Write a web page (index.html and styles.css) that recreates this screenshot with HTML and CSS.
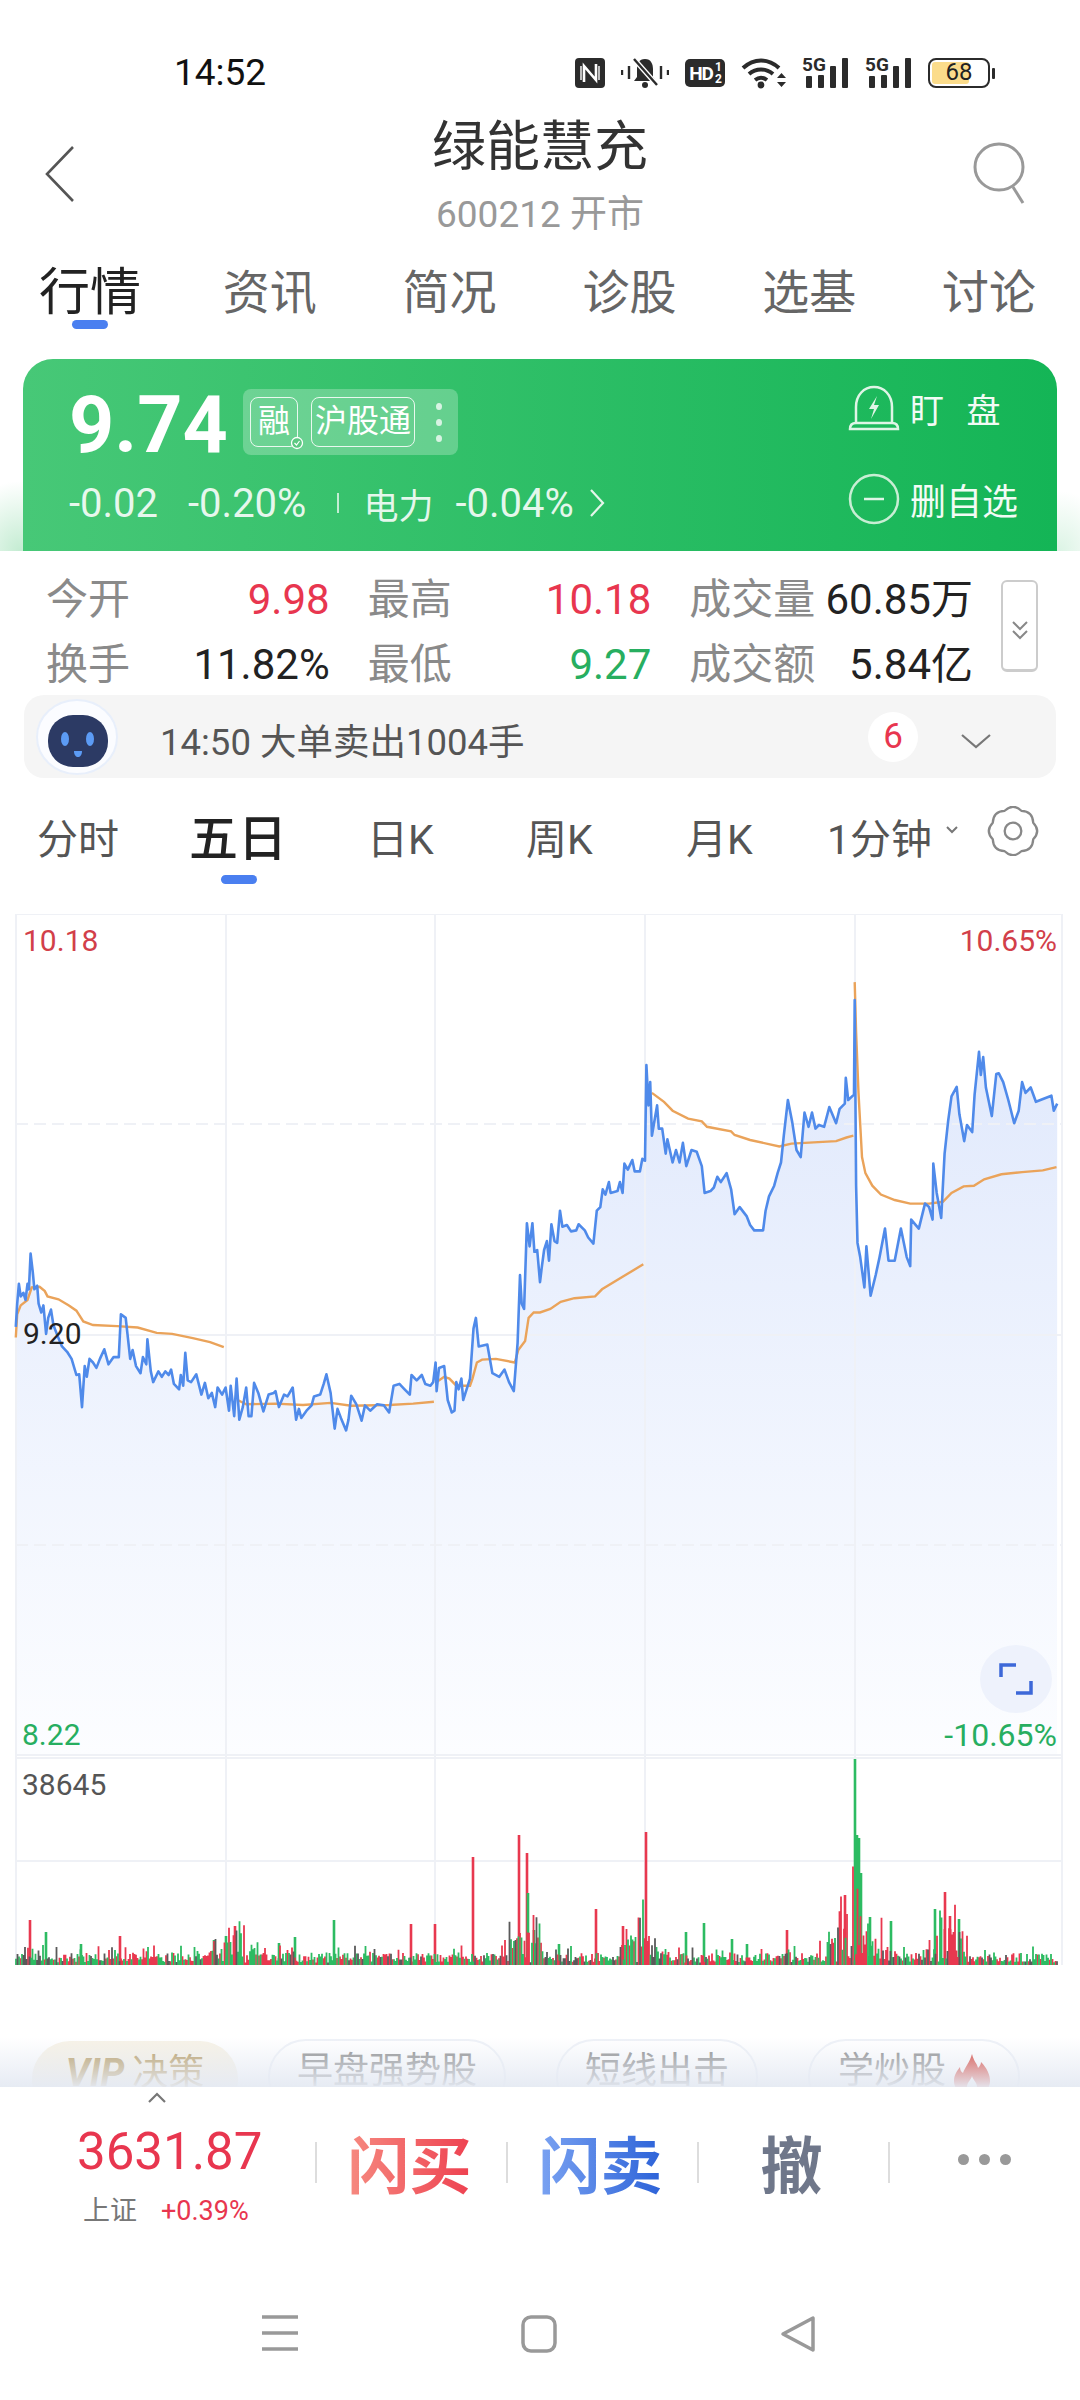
FILE: index.html
```html
<!DOCTYPE html>
<html lang="zh-CN">
<head>
  <meta charset="UTF-8">
  <meta name="viewport" content="width=device-width, initial-scale=1.0">
  <title>绿能慧充</title>
  <link rel="stylesheet" href="styles.css">
</head>
<body>
  <div class="page">

    <!-- Status bar -->
    <div class="statusbar">
      <span class="clock">14:52</span>
      <div class="status-icons">
        <svg width="30" height="30" viewBox="0 0 30 30"><rect width="30" height="30" rx="4" fill="#2b2b2b"/><path d="M9 24V8l12 14V6" fill="none" stroke="#fff" stroke-width="2.6"/><path d="M6 8v14M24 8v14" stroke="#fff" stroke-width="1.4"/></svg>
        <svg width="48" height="32" viewBox="0 0 48 32"><path d="M24 2c-6 0-8 5-8 10v8l-3 4h22l-3-4v-8c0-5-2-10-8-10z" fill="#2b2b2b"/><circle cx="24" cy="28" r="3" fill="#2b2b2b"/><path d="M13 2l23 26" stroke="#fff" stroke-width="5"/><path d="M13 2l23 26" stroke="#2b2b2b" stroke-width="2.4"/><path d="M1 13v5M8 9v13M40 9v13M47 13v5" stroke="#2b2b2b" stroke-width="2.4"/></svg>
        <div class="hd-icon"><span>HD</span><span class="hd-frac">1<br>2</span></div>
        <svg width="45" height="32" viewBox="0 0 45 32"><path d="M2 11c11-10 25-10 36 0M8 17c7-6 17-6 24 0M14 23c4-3 8-3 12 0" fill="none" stroke="#2b2b2b" stroke-width="4"/><circle cx="20" cy="28" r="3.4" fill="#2b2b2b"/><path d="M36 21l4.500-5 4.500 5zM36 25l4.500 5 4.500-5z" fill="#2b2b2b"/></svg>
        <div class="signal"><span class="signal-5g">5G</span><i class="b1"></i><i class="b2"></i><i class="b3"></i><i class="b4"></i></div>
        <div class="signal"><span class="signal-5g">5G</span><i class="b1"></i><i class="b2"></i><i class="b3"></i><i class="b4"></i></div>
        <div class="battery"><div class="battery-body"><div class="battery-fill"></div><span>68</span></div><div class="battery-cap"></div></div>
      </div>
    </div>

    <!-- Title -->
    <div class="titlebar">
      <svg class="back-icon" width="32" height="58" viewBox="0 0 32 58"><path d="M29 2L3 29l26 27" fill="none" stroke="#555" stroke-width="2.6"/></svg>
      <div class="title-block">
        <div class="stock-name">绿能慧充</div>
        <div class="stock-code">600212 开市</div>
      </div>
      <svg class="search-icon" width="56" height="64" viewBox="0 0 56 64"><ellipse cx="27" cy="25" rx="24" ry="23" fill="none" stroke="#999" stroke-width="3"/><path d="M41 45l10 16" stroke="#999" stroke-width="3"/></svg>
    </div>

    <!-- Main tabs -->
    <div class="tabs">
      <div class="tab tab-active">行情</div>
      <div class="tab">资讯</div>
      <div class="tab">简况</div>
      <div class="tab">诊股</div>
      <div class="tab">选基</div>
      <div class="tab">讨论</div>
    </div>

    <!-- Green quote card -->
    <div class="card-wrap">
      <div class="quote-card">
        <div class="quote-left">
          <div class="quote-top">
            <span class="price">9.74</span>
            <div class="tag-group">
              <span class="tag tag-rong">融<svg class="tag-check" width="14" height="14" viewBox="0 0 14 14"><circle cx="7" cy="7" r="5.500" fill="#5cc982" stroke="#fff" stroke-width="1.300"/><path d="M4.500 7l2 2 3-4" fill="none" stroke="#fff" stroke-width="1.200"/></svg></span>
              <span class="tag">沪股通</span>
              <span class="tag-dots"><i></i><i></i><i></i></span>
            </div>
          </div>
          <div class="quote-bottom">
            <span>-0.02</span>
            <span class="chg-pct">-0.20%</span>
            <span class="quote-divider"></span>
            <span class="sector-name">电力</span>
            <span class="sector-pct">-0.04%</span>
            <svg width="16" height="30" viewBox="0 0 16 30"><path d="M2 2l12 13L2 28" fill="none" stroke="#e4f6ea" stroke-width="2.200"/></svg>
          </div>
        </div>
        <div class="quote-actions">
          <div class="quote-action">
            <svg width="52" height="46" viewBox="0 0 52 46"><path d="M8 38V22C8 10 16 2 26 2s18 8 18 20v16" fill="none" stroke="#dff5e6" stroke-width="2.500"/><path d="M2 44c0-4 2-6 6-6h36c4 0 6 2 6 6z" fill="none" stroke="#dff5e6" stroke-width="2.500"/><path d="M29 11l-8 13h5l-3 10 8-14h-5z" fill="#dff5e6"/></svg>
            <span class="action-watch">盯 盘</span>
          </div>
          <div class="quote-action">
            <svg width="52" height="52" viewBox="0 0 52 52"><circle cx="26" cy="26" r="24" fill="none" stroke="#c8eed4" stroke-width="2.500"/><path d="M16 26h20" stroke="#dff5e6" stroke-width="2.500"/></svg>
            <span class="action-remove">删自选</span>
          </div>
        </div>
      </div>
    </div>

    <!-- Stats -->
    <div class="stats">
      <div class="stat-grid">
        <div class="stat"><span class="stat-label">今开</span><span class="up">9.98</span></div>
        <div class="stat"><span class="stat-label">最高</span><span class="up">10.18</span></div>
        <div class="stat"><span class="stat-label">成交量</span><span>60.85万</span></div>
        <div class="stat"><span class="stat-label">换手</span><span>11.82%</span></div>
        <div class="stat"><span class="stat-label">最低</span><span class="down">9.27</span></div>
        <div class="stat"><span class="stat-label">成交额</span><span>5.84亿</span></div>
      </div>
      <div class="stat-toggle">
        <svg width="18" height="20" viewBox="0 0 18 20"><path d="M2 2l7 7 7-7M2 11l7 7 7-7" fill="none" stroke="#888" stroke-width="2"/></svg>
      </div>
    </div>

    <!-- Notice -->
    <div class="notice">
      <svg class="robot" width="84" height="76" viewBox="0 0 84 76"><ellipse cx="42" cy="38" rx="40" ry="37" fill="#fbfcff" stroke="#e8effb" stroke-width="2"/><rect x="13" y="16" width="60" height="52" rx="25" fill="#2c3a64"/><ellipse cx="30" cy="40" rx="4" ry="7" fill="#5c9bf5"/><ellipse cx="55" cy="40" rx="4" ry="7" fill="#5c9bf5"/><path d="M39 52h8c0 4-2 6-4 6s-4-2-4-6z" fill="#5c9bf5"/></svg>
      <span class="notice-text">14:50 大单卖出1004手</span>
      <span class="notice-badge">6</span>
      <svg class="notice-arrow" width="32" height="16" viewBox="0 0 32 16"><path d="M2 2l14 12L30 2" fill="none" stroke="#777" stroke-width="2.200"/></svg>
    </div>

    <!-- Period tabs -->
    <div class="periods">
      <div class="period period-1">分时</div>
      <div class="period period-2 period-active">五日</div>
      <div class="period period-3">日K</div>
      <div class="period period-4">周K</div>
      <div class="period period-5">月K</div>
      <div class="period period-6">1分钟</div>
      <svg class="period-arrow" width="14" height="10" viewBox="0 0 14 10"><path d="M2 2l5 5 5-5" fill="none" stroke="#777" stroke-width="2"/></svg>
      <svg class="gear" width="54" height="50" viewBox="4 2 48 48"><path d="M47.400 18Q55 26 47.400 34Q47 45 36 45.400Q28 53 20 45.400Q9 45 8.600 34Q1 26 8.600 18Q9 7 20 6.600Q28 -1 36 6.600Q47 7 47.400 18z" fill="none" stroke="#888" stroke-width="2.200" stroke-linejoin="round"/><circle cx="28" cy="26" r="8" fill="none" stroke="#888" stroke-width="2.200"/></svg>
    </div>

    <!-- Chart, drawn by chart.js -->
    <div class="chart">
      <svg id="chartSvg" width="1080" height="1056" viewBox="0 914 1080 1056"></svg>
      <span class="axis-label axis-high">10.18</span>
      <span class="axis-label axis-high-pct">10.65%</span>
      <span class="axis-label axis-prev">9.20</span>
      <span class="axis-label axis-low">8.22</span>
      <span class="axis-label axis-low-pct">-10.65%</span>
      <span class="axis-label axis-vol">38645</span>
      <div class="expand-btn">
        <svg width="34" height="32" viewBox="0 0 34 32"><path d="M2 14V2h15M32 18v12H17" fill="none" stroke="#3d68d8" stroke-width="3.500"/></svg>
      </div>
    </div>

    <!-- Chips, fading under the toolbar -->
    <div class="chips">
      <div class="chip chip-vip"><b>VIP</b> 决策</div>
      <div class="chip chip-2">早盘强势股</div>
      <div class="chip chip-3">短线出击</div>
      <div class="chip chip-4">学炒股
        <svg width="36" height="42" viewBox="0 0 36 42"><path d="M18 0c2 8 5 9 6 14 2-2 3-4 3-6 6 6 9 13 9 19 0 9-8 15-18 15S0 36 0 27c0-6 3-10 6-14 0 3 1 5 3 6 2-6 7-11 9-19z" fill="#d63a2e"/><path d="M18 22c1 4 5 6 5 11 0 3-2 5-5 5s-5-2-5-5c0-5 4-7 5-11z" fill="#fff"/></svg>
      </div>
    </div>

    <!-- Bottom toolbar -->
    <div class="toolbar">
      <svg class="index-arrow" width="18" height="11" viewBox="0 0 18 11"><path d="M1 10l8-8 8 8" fill="none" stroke="#777" stroke-width="2.200"/></svg>
      <div class="index-block">
        <div class="index-value">3631.87</div>
        <div class="index-meta"><span class="index-name">上证</span><span class="index-pct">+0.39%</span></div>
      </div>
      <div class="tool-cell"><span class="tool-text tool-buy">闪买</span></div>
      <div class="tool-cell"><span class="tool-text tool-sell">闪卖</span></div>
      <div class="tool-cell"><span class="tool-text tool-cancel">撤</span></div>
      <div class="tool-cell tool-more"><i></i><i></i><i></i></div>
    </div>

    <!-- Navigation bar -->
    <div class="navbar">
      <svg width="36" height="36" viewBox="0 0 36 36"><path d="M0 2h36M0 18h36M0 34h36" stroke="#999" stroke-width="3.500"/></svg>
      <svg width="36" height="38" viewBox="0 0 36 38"><rect x="2" y="2" width="32" height="34" rx="8" fill="none" stroke="#999" stroke-width="3.500"/></svg>
      <svg width="36" height="38" viewBox="0 0 36 38"><path d="M33 3v32L3 19z" fill="none" stroke="#999" stroke-width="3.500" stroke-linejoin="round"/></svg>
    </div>

  </div>
  <script src="chart.js"></script>
</body>
</html>
```

FILE: styles.css
```css
* {
  box-sizing: border-box;
}

body {
  margin: 0;
  background-color: #fff;
  font-family: Roboto, "Noto Sans CJK SC", sans-serif;
  color: #222;
}

.page {
  width: 1080px;
  height: 2400px;
  overflow: hidden;
  position: relative;
}

/* Status bar */
.statusbar {
  height: 100px;
  display: flex;
  justify-content: space-between;
  padding: 52px 85px 0 174px;
}

.clock {
  font-size: 37px;
  line-height: 42px;
  color: #111;
}

.status-icons {
  display: flex;
  gap: 16px;
  height: 32px;
  margin-top: 5px;
  align-items: center;
}

.hd-icon {
  width: 40px;
  height: 28px;
  border-radius: 5px;
  background-color: #2b2b2b;
  color: #fff;
  font-size: 19px;
  font-weight: 700;
  letter-spacing: -1px;
  display: flex;
  align-items: center;
  justify-content: center;
  gap: 2px;
}

.hd-frac {
  font-size: 12px;
  line-height: 12px;
}

.signal {
  width: 47px;
  height: 30px;
  position: relative;
}

.signal-5g {
  position: absolute;
  left: 0;
  top: -3px;
  font-size: 19px;
  line-height: 19px;
  font-weight: 700;
  color: #2b2b2b;
}

.signal i {
  position: absolute;
  bottom: 0;
  width: 6px;
  background-color: #2b2b2b;
  border-radius: 1px;
}

.signal .b1 { left: 4px; height: 12px; }
.signal .b2 { left: 16px; height: 13px; }
.signal .b3 { left: 28px; height: 22px; }
.signal .b4 { left: 40px; height: 30px; }

.battery {
  display: flex;
  align-items: center;
  gap: 2px;
}

.battery-body {
  width: 62px;
  height: 30px;
  border: 2.5px solid #2b2b2b;
  border-radius: 8px;
  position: relative;
  padding: 2px;
  display: flex;
}

.battery-fill {
  width: 68%;
  background-color: #fbdc8b;
  border-radius: 3px;
}

.battery-body span {
  position: absolute;
  left: 0;
  right: 0;
  top: 0;
  text-align: center;
  font-size: 24px;
  line-height: 25px;
  color: #222;
}

.battery-cap {
  width: 3px;
  height: 11px;
  background-color: #2b2b2b;
  border-radius: 1px;
}

/* Title */
.titlebar {
  height: 150px;
  display: grid;
  grid-template-columns: 1fr auto 1fr;
  padding: 0 48px;
}

.back-icon {
  margin: 45px 0 0 -4px;
}

.search-icon {
  margin: 42px 4px 0 0;
  justify-self: end;
}

.title-block {
  text-align: center;
  padding-top: 16px;
}

.stock-name {
  font-size: 54px;
  line-height: 64px;
  color: #333;
}

.stock-code {
  font-size: 37px;
  line-height: 46px;
  margin-top: 12px;
  color: #999;
}

/* Main tabs */
.tabs {
  height: 90px;
  display: flex;
  justify-content: space-between;
  padding: 11px 44px 0 39px;
}

.tab {
  font-size: 47px;
  line-height: 64px;
  color: #666;
}

.tab-active {
  font-size: 51px;
  color: #222;
  position: relative;
  margin-right: -4px;
}

.tab-active::after {
  content: "";
  position: absolute;
  left: 33px;
  top: 59px;
  width: 36px;
  height: 9px;
  border-radius: 5px;
  background-color: #4a7ff0;
}

/* Quote card */
.card-wrap {
  height: 211px;
  padding: 19px 23px 0;
  background:
    radial-gradient(ellipse 60px 70px at 20px 100%, #c4ecd2, rgba(255, 255, 255, 0)) no-repeat,
    radial-gradient(ellipse 50px 60px at 1060px 100%, #dcf4e5, rgba(255, 255, 255, 0)) no-repeat;
}

.quote-card {
  height: 192px;
  border-radius: 30px 30px 0 0;
  background: linear-gradient(90deg, #47c877, #14b556);
  color: #fff;
  display: flex;
  justify-content: space-between;
  padding: 30px 29px 0 46px;
}

.quote-top {
  display: flex;
  align-items: flex-start;
  gap: 15px;
  height: 76px;
}

.price {
  font-size: 79px;
  line-height: 72px;
  font-weight: 700;
}

.tag-group {
  width: 215px;
  height: 66px;
  background-color: rgba(255, 255, 255, 0.25);
  border-radius: 8px;
  display: flex;
  align-items: center;
  gap: 13px;
  padding-left: 7px;
}

.tag {
  height: 50px;
  padding: 0 3px;
  border: 1.5px solid rgba(255, 255, 255, 0.85);
  border-radius: 8px;
  font-size: 32px;
  line-height: 46px;
  position: relative;
}

.tag-rong {
  padding: 0 7px;
}

.tag-check {
  position: absolute;
  right: -7px;
  bottom: -4px;
}

.tag-dots {
  display: flex;
  flex-direction: column;
  gap: 9px;
  margin-left: 8px;
}

.tag-dots i {
  width: 6px;
  height: 7px;
  border-radius: 50%;
  background-color: rgba(255, 255, 255, 0.75);
}

.quote-bottom {
  display: flex;
  align-items: center;
  height: 40px;
  margin-top: 18px;
  font-size: 40px;
  color: rgba(255, 255, 255, 0.88);
}

.chg-pct {
  margin-left: 30px;
}

.quote-divider {
  width: 2px;
  height: 20px;
  margin: 0 24px 0 31px;
  background-color: rgba(255, 255, 255, 0.7);
}

.sector-name {
  font-size: 35px;
}

.sector-pct {
  margin: 0 15px 0 22px;
}

.quote-actions {
  display: flex;
  flex-direction: column;
  gap: 41px;
  width: 180px;
  margin-top: -6px;
}

.quote-action {
  display: flex;
  align-items: center;
  gap: 10px;
  height: 50px;
  font-size: 36px;
  color: #f2fbf5;
  white-space: nowrap;
}

.action-watch {
  word-spacing: 14px;
  font-size: 34px;
}

/* Stats */
.stats {
  height: 144px;
  display: flex;
  padding: 16px 0 0 46px;
}

.stat-grid {
  width: 927px;
  display: grid;
  grid-template-columns: repeat(3, 1fr);
  grid-auto-rows: 65px;
  column-gap: 38px;
  font-size: 42px;
  line-height: 65px;
  color: #222;
}

.stat {
  display: flex;
  justify-content: space-between;
}

.stat-label {
  color: #8a8a8a;
}

.up {
  color: #e8364f;
}

.down {
  color: #27ae60;
}

.stat-toggle {
  width: 37px;
  height: 92px;
  margin: 13px 0 0 28px;
  border: 2px solid #ccc;
  border-bottom-width: 3px;
  border-radius: 6px;
  display: flex;
  align-items: center;
  justify-content: center;
  padding-top: 8px;
}

/* Notice */
.notice {
  width: 1032px;
  height: 83px;
  margin-left: 24px;
  background-color: #f5f5f5;
  border-radius: 20px;
  display: flex;
  align-items: center;
  padding-left: 11px;
}

.notice-text {
  margin: 5px 0 0 41px;
  font-size: 36.500px;
  color: #555;
  width: 703px;
  white-space: nowrap;
}

.notice-badge {
  width: 50px;
  height: 50px;
  margin-left: 5px;
  border-radius: 50%;
  background-color: #fff;
  color: #e8364f;
  font-size: 35px;
  line-height: 50px;
  text-align: center;
}

.notice-arrow {
  margin: 8px 0 0 42px;
}

/* Period tabs */
.periods {
  height: 136px;
  position: relative;
  display: grid;
  grid-template-columns: 152px 178px 159px 160px 141px 1fr;
  padding: 32px 0 0 37px;
  font-size: 41px;
  line-height: 60px;
  color: #555;
}

.period-active {
  font-size: 49px;
  color: #222;
  font-weight: 500;
  position: relative;
}

.period-active::after {
  content: "";
  position: absolute;
  left: 32px;
  top: 65px;
  width: 36px;
  height: 9px;
  border-radius: 5px;
  background-color: #4a7ff0;
}

.period-arrow {
  position: absolute;
  left: 945px;
  top: 47px;
}

.gear {
  position: absolute;
  left: 986px;
  top: 28px;
}

/* Chart */
.chart {
  height: 1123px;
  position: relative;
}

.chart svg {
  display: block;
}

.axis-label {
  position: absolute;
  font-size: 30px;
  line-height: 32px;
}

.axis-high { left: 23px; top: 11px; color: #d23f4a; }
.axis-high-pct { right: 23px; top: 11px; color: #d23f4a; }
.axis-prev { left: 23px; top: 404px; color: #222; }
.axis-low { left: 22px; top: 805px; color: #27ae60; }
.axis-low-pct { right: 23px; top: 805px; color: #27ae60; font-size: 32px; }
.axis-vol { left: 22px; top: 855px; color: #555; }

.expand-btn {
  position: absolute;
  left: 980px;
  top: 731px;
  width: 72px;
  height: 68px;
  border-radius: 50%;
  background-color: #eef2fc;
  display: flex;
  align-items: center;
  justify-content: center;
}

/* Chips */
.chips {
  height: 50px;
  overflow: hidden;
  position: relative;
  font-size: 36px;
  color: #888;
}

.chips::after {
  content: "";
  position: absolute;
  inset: 0;
  background: linear-gradient(rgba(229, 234, 243, 0), rgba(229, 234, 243, 0.95));
}

.chip {
  position: absolute;
  top: 2px;
  height: 76px;
  border: 2px solid #eef1f7;
  border-radius: 38px;
  display: flex;
  justify-content: center;
  gap: 8px;
  line-height: 50px;
  padding-top: 5px;
}

.chip-vip {
  left: 32px;
  top: 4px;
  width: 206px;
  border: none;
  background-color: #f7f2e6;
  color: #b4975a;
  padding-top: 7px;
}

.chip-vip b {
  font-style: italic;
  font-size: 38px;
}

.chip-2 { left: 268px; width: 238px; }
.chip-3 { left: 556px; width: 202px; }
.chip-4 { left: 808px; width: 212px; }

.chip-4 svg {
  margin-top: 8px;
}

/* Toolbar */
.toolbar {
  height: 213px;
  position: relative;
  background-color: #fff;
  display: flex;
}

.index-arrow {
  position: absolute;
  left: 148px;
  top: 5px;
}

.index-block {
  width: 315px;
  padding: 37px 0 0 77px;
}

.index-value {
  font-size: 51px;
  line-height: 56px;
  color: #e8364f;
}

.index-meta {
  display: flex;
  gap: 24px;
  margin-top: 13px;
  font-size: 27px;
  line-height: 36px;
  padding-left: 6px;
}

.index-name {
  color: #777;
}

.index-pct {
  color: #e8364f;
}

.tool-cell {
  width: 191px;
  height: 41px;
  margin-top: 55px;
  padding-right: 4px;
  border-left: 2px solid #ddd;
  display: flex;
  justify-content: center;
}

.tool-text {
  font-size: 62px;
  line-height: 72px;
  height: 72px;
  margin-top: -10px;
  font-weight: 700;
  -webkit-background-clip: text;
  background-clip: text;
  color: transparent;
}

.tool-buy {
  background-image: linear-gradient(90deg, #f68a80, #ee4150);
}

.tool-sell {
  background-image: linear-gradient(90deg, #7ba3f2, #2c62d8);
}

.tool-cancel {
  background-image: linear-gradient(#6f778a, #6f778a);
}

.tool-more {
  align-items: center;
  gap: 10px;
  padding-right: 0;
}

.tool-more i {
  width: 11px;
  height: 11px;
  margin-top: -6px;
  border-radius: 50%;
  background-color: #999;
}

/* Navigation bar */
.navbar {
  display: flex;
  padding: 15px 0 0 262px;
  gap: 223px;
}
```

FILE: chart.js
```js
// Traced from the two halves of the chart: x is px on a 540 wide crop scaled to 1568,
// y is px on a 560 tall crop scaled to 1568, both starting at y = 900.
const LEFT_X = 0;
const RIGHT_X = 540;

function toPage(points, offsetX) {
  return points.map(p => (offsetX + p[0] / 2.904).toFixed(1) + ',' + (900 + p[1] / 2.8).toFixed(1));
}

const priceLeft = [[46,1195],[50,1130],[55,1075],[60,1110],[68,1100],[74,1120],[80,1075],[84,1090],[89,990],[95,1040],[100,1090],[108,1080],[112,1130],[120,1155],[126,1135],[134,1215],[140,1170],[148,1147],[155,1190],[165,1215],[180,1250],[195,1265],[208,1285],[222,1330],[230,1328],[238,1420],[246,1305],[252,1335],[260,1285],[270,1295],[280,1310],[290,1285],[303,1258],[315,1300],[330,1280],[345,1280],[351,1160],[365,1170],[378,1285],[385,1260],[395,1305],[408,1325],[415,1280],[425,1300],[428,1230],[438,1320],[445,1350],[460,1320],[470,1335],[480,1320],[490,1330],[497,1315],[505,1355],[520,1370],[525,1330],[532,1360],[538,1268],[545,1345],[555,1350],[570,1328],[585,1385],[595,1352],[605,1395],[615,1380],[625,1420],[632,1365],[645,1385],[655,1365],[665,1430],[670,1360],[680,1445],[687,1340],[695,1455],[705,1420],[715,1365],[722,1445],[730,1445],[738,1352],[750,1380],[765,1432],[780,1385],[795,1380],[800,1375],[810,1420],[825,1385],[835,1390],[850,1365],[860,1455],[868,1425],[875,1450],[890,1430],[905,1415],[912,1390],[930,1385],[940,1355],[948,1328],[960,1380],[972,1480],[980,1425],[990,1450],[1005,1485],[1012,1455],[1020,1388],[1035,1412],[1050,1458],[1060,1415],[1075,1430],[1095,1412],[1115,1415],[1130,1435],[1143,1360],[1160,1355],[1175,1370],[1190,1385],[1195,1330],[1210,1345],[1225,1330],[1235,1355],[1250,1360],[1258,1350],[1265,1295],[1268,1375],[1275,1310],[1290,1305],[1300,1400],[1312,1435],[1320,1430],[1325,1350],[1332,1370],[1340,1340],[1345,1400],[1355,1370],[1365,1340],[1375,1200],[1382,1170],[1390,1250],[1415,1245],[1430,1325],[1450,1335],[1465,1315],[1478,1350],[1492,1375],[1503,1240],[1510,1050],[1515,1130],[1522,1145],[1530,905],[1538,970],[1546,905],[1552,985],[1560,980]];

const priceRight = [[0,1070],[5,1030],[12,980],[20,955],[26,1010],[33,908],[42,955],[50,960],[58,870],[65,915],[78,910],[90,928],[105,925],[112,908],[130,925],[140,945],[155,962],[165,870],[175,860],[182,810],[190,825],[200,790],[205,820],[225,815],[232,790],[240,820],[245,738],[255,755],[268,728],[275,760],[290,760],[297,725],[305,730],[309,462],[315,575],[320,510],[325,660],[340,575],[345,640],[355,640],[365,710],[370,670],[385,735],[395,700],[405,735],[415,680],[425,745],[440,700],[455,705],[470,745],[478,820],[495,815],[505,805],[515,775],[525,790],[542,765],[555,810],[565,880],[580,860],[600,885],[610,910],[622,925],[648,925],[655,870],[665,830],[680,800],[690,765],[700,735],[708,660],[720,560],[732,620],[745,700],[757,720],[768,595],[780,635],[790,595],[800,640],[810,630],[825,635],[840,580],[860,625],[870,585],[885,570],[888,498],[895,560],[912,545],[914,280],[918,800],[922,960],[930,1000],[942,1085],[948,970],[960,1108],[975,1050],[985,1005],[1002,920],[1012,1010],[1030,1010],[1048,920],[1065,1000],[1075,1025],[1078,895],[1100,920],[1118,850],[1130,860],[1140,895],[1142,738],[1152,820],[1165,890],[1175,710],[1185,620],[1195,550],[1210,523],[1218,600],[1232,675],[1240,630],[1255,650],[1262,545],[1275,425],[1280,490],[1287,440],[1295,525],[1312,605],[1325,487],[1332,485],[1345,510],[1360,560],[1377,625],[1390,590],[1400,510],[1410,540],[1425,525],[1440,565],[1485,548],[1492,590],[1502,570]];

// Average line, one piece per trading day
const avgDays = [
  toPage([[46,1225],[50,1160],[60,1135],[80,1120],[92,1085],[115,1083],[130,1095],[138,1110],[170,1118],[200,1135],[222,1150],[242,1180],[270,1190],[340,1193],[400,1197],[455,1212],[500,1215],[560,1227],[610,1238],[650,1252]], LEFT_X),
  toPage([[690,1400],[715,1412],[800,1410],[880,1414],[960,1408],[1020,1416],[1130,1414],[1200,1410],[1260,1405]], LEFT_X),
  toPage([[1268,1350],[1290,1335],[1305,1340],[1325,1360],[1365,1360],[1372,1340],[1385,1295],[1400,1287],[1440,1285],[1495,1295],[1505,1260],[1525,1235],[1535,1170],[1550,1155]], LEFT_X)
    .concat(toPage([[0,1155],[30,1145],[60,1125],[100,1115],[160,1110],[180,1090],[240,1055],[300,1020]], RIGHT_X)),
  toPage([[325,540],[360,565],[385,590],[430,612],[470,620],[485,635],[555,648],[565,658],[610,672],[695,690],[730,682],[860,675],[890,665],[910,660]], RIGHT_X),
  toPage([[914,230],[918,370],[925,540],[935,720],[945,765],[965,800],[990,825],[1030,840],[1075,850],[1130,850],[1170,845],[1195,820],[1230,802],[1260,800],[1290,782],[1340,768],[1400,762],[1460,757],[1500,748]], RIGHT_X)
];

const pricePoints = toPage(priceLeft, LEFT_X).concat(toPage(priceRight, RIGHT_X));

// Tall volume bars, [x, top y] on the page
const BASE_Y = 1965;
const tallRed = [[30,1920],[120,1936],[235,1926],[411,1924],[435,1924],[473,1857],[519,1835],[527,1853],[596,1909],[623,1926],[646,1832],[787,1930],[845,1895],[945,1892],[950,1916]];
const tallGreen = [[46,1932],[81,1944],[214,1940],[226,1936],[279,1943],[295,1937],[334,1920],[534,1930],[528,1893],[559,1944],[686,1932],[704,1923],[732,1939],[747,1944],[855,1759],[857,1835],[859,1838],[861,1873],[870,1917],[891,1921],[935,1909],[959,1919]];

// Small bars are filler, so a fixed seed keeps the picture the same on every load
let seed = 20240;
function rand() {
  seed = (seed * 1103515 + 12345) % 2147483648;
  return seed / 2147483648;
}

function clusterHeight(x) {
  const peaks = [[235,30,30],[525,45,22],[645,50,26],[855,65,32],[950,45,24]];
  let h = 12;
  peaks.forEach(p => {
    h = Math.max(h, p[1] * Math.exp(-Math.pow((x - p[0]) / p[2], 2)));
  });
  return h;
}

function barPath(list) {
  return list.map(b => 'M' + b[0] + ' ' + BASE_Y + 'V' + b[1]).join('');
}

function buildVolume() {
  const groups = { red: [], green: [], dark: [] };
  for (let x = 16; x < 1058; x += 1.5) {
    const h = 2.5 + clusterHeight(x) * rand() * (rand() > 0.75 ? 1.5 : 0.8);
    const pick = rand();
    const bar = [x, (BASE_Y - h).toFixed(1)];
    if (pick < 0.42) groups.red.push(bar);
    else if (pick < 0.84) groups.green.push(bar);
    else groups.dark.push(bar);
  }
  return (
    '<path d="' + barPath(tallRed) + '" stroke="#e8384f" stroke-width="2.6"/>' +
    '<path d="' + barPath(tallGreen) + '" stroke="#2dbb62" stroke-width="2.6"/>' +
    '<path d="' + barPath(groups.red) + '" stroke="#e8384f" stroke-width="1.8"/>' +
    '<path d="' + barPath(groups.green) + '" stroke="#2dbb62" stroke-width="1.8"/>' +
    '<path d="' + barPath(groups.dark) + '" stroke="#5a5a5a" stroke-width="1.8"/>'
  );
}

function buildGrid() {
  let out = '<g stroke="#eff1f6" stroke-width="2" fill="none">';
  out += '<path d="M16 914H1062M16 1335H1062M16 1755H1062M16 1758H1062M16 1861H1062"/>';
  out += '<path d="M16 914V1965M226 914V1965M435 914V1965M645 914V1965M855 914V1965M1062 914V1965"/>';
  out += '<path d="M16 1124H1062M16 1545H1062" stroke-dasharray="12 6"/>';
  return out + '</g>';
}

function drawChart() {
  const area = pricePoints.join(' ') + ' 1057,1755 16,1755';
  document.getElementById('chartSvg').innerHTML =
    '<defs><linearGradient id="areaFill" x1="0" y1="0" x2="0" y2="1">' +
    '<stop offset="0" stop-color="#dfe8fc"/><stop offset="1" stop-color="#fcfdff"/>' +
    '</linearGradient></defs>' +
    '<polygon points="' + area + '" fill="url(#areaFill)"/>' +
    buildGrid() +
    buildVolume() +
    avgDays.map(d => '<polyline points="' + d.join(' ') + '" fill="none" stroke="#eaa35a" stroke-width="2.4"/>').join('') +
    '<polyline points="' + pricePoints.join(' ') + '" fill="none" stroke="#4f8aea" stroke-width="2.6" stroke-linejoin="round"/>';
}

drawChart();
```
